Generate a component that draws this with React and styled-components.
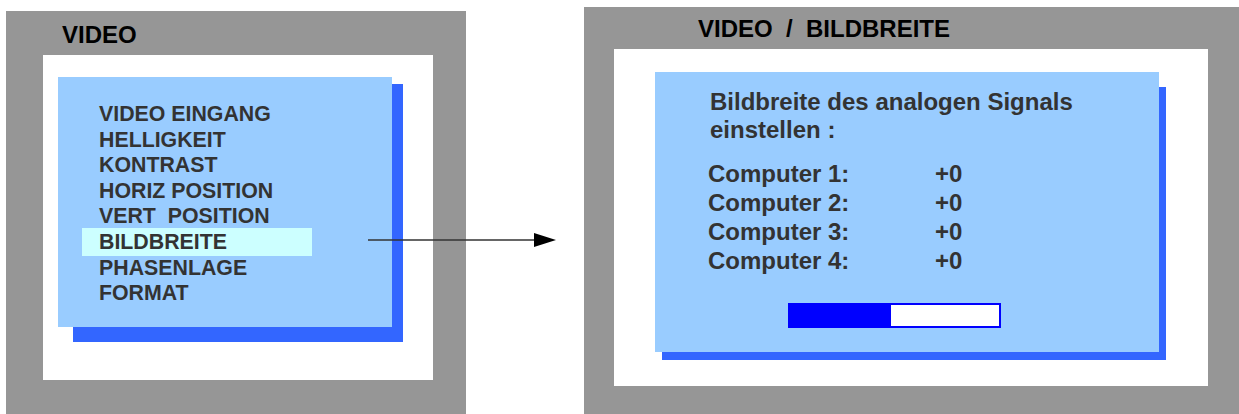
import React from 'react';
import styled, { createGlobalStyle } from 'styled-components';

const GlobalStyle = createGlobalStyle`
  html, body {
    margin: 0;
    padding: 0;
    background: #ffffff;
  }
  body {
    font-family: "Liberation Sans", Arial, Helvetica, sans-serif;
    font-weight: bold;
  }
`;

const Page = styled.div`
  position: relative;
  display: flex;
  align-items: flex-start;
  width: 1239px;
  height: 414px;
  overflow: hidden;
`;

const Frame = styled.section`
  box-sizing: border-box;
  display: flex;
  flex-direction: column;
  flex-shrink: 0;
  background: #969696;
  width: ${(p) => p.$width}px;
  height: ${(p) => p.$height}px;
  margin-left: ${(p) => p.$left}px;
  margin-top: ${(p) => p.$top}px;
  padding-top: ${(p) => p.$padTop}px;
`;

const FrameTitle = styled.h1`
  margin: 0 0 6px ${(p) => p.$indent}px;
  font-size: 24px;
  line-height: 28px;
  font-weight: bold;
  color: #000000;
  white-space: pre;
`;

const Screen = styled.div`
  box-sizing: border-box;
  background: #ffffff;
  width: ${(p) => p.$width}px;
  height: ${(p) => p.$height}px;
  margin-left: ${(p) => p.$indent}px;
  padding-top: ${(p) => p.$padTop}px;
  padding-left: ${(p) => p.$padLeft}px;
`;

const Stack = styled.div`
  display: grid;
  justify-content: start;
  align-content: start;
`;

const Shadow = styled.div`
  grid-area: 1 / 1;
  justify-self: start;
  align-self: start;
  background: #3366ff;
  width: ${(p) => p.$width}px;
  height: ${(p) => p.$height}px;
  margin-left: ${(p) => p.$dx}px;
  margin-top: ${(p) => p.$dy}px;
`;

const Panel = styled.div`
  grid-area: 1 / 1;
  justify-self: start;
  align-self: start;
  box-sizing: border-box;
  background: #99ccff;
  color: #333333;
  width: ${(p) => p.$width}px;
  height: ${(p) => p.$height}px;
  padding-top: ${(p) => p.$padTop}px;
  padding-left: ${(p) => p.$padLeft}px;
`;

const MenuList = styled.ul`
  list-style: none;
  margin: 0;
  padding: 0;
`;

const MenuItem = styled.li`
  box-sizing: border-box;
  font-size: 21.33px;
  line-height: 25.6px;
  height: 25.6px;
  white-space: pre;
  ${(p) =>
    p.$active &&
    `
    width: 230px;
    margin-left: -17px;
    padding-left: 17px;
    background: #ccffff;
    box-shadow: 0 -2px 0 #ccffff;
  `}
`;

const Heading = styled.p`
  margin: 0 0 0 2px;
  font-size: 24px;
  line-height: 28px;
`;

const Settings = styled.div`
  display: grid;
  grid-template-columns: 227px auto;
  margin-top: 15px;
  font-size: 24px;
  line-height: 29px;
`;

const Bar = styled.div`
  box-sizing: border-box;
  width: 213px;
  height: 25px;
  margin-top: 28px;
  margin-left: 80px;
  border: 2px solid #0000ff;
  background: #ffffff;
`;

const BarFill = styled.div`
  height: 100%;
  width: ${(p) => p.$value * 100}%;
  background: #0000ff;
`;

const Arrow = styled.svg`
  position: absolute;
  left: 368px;
  top: 232px;
`;

const menu = [
  'VIDEO EINGANG',
  'HELLIGKEIT',
  'KONTRAST',
  'HORIZ POSITION',
  'VERT  POSITION',
  'BILDBREITE',
  'PHASENLAGE',
  'FORMAT',
];

const computers = ['Computer 1:', 'Computer 2:', 'Computer 3:', 'Computer 4:'];

export default function App() {
  return (
    <>
      <GlobalStyle />
      <Page>
        <Frame $width={460} $height={403} $left={6} $top={11} $padTop={10}>
          <FrameTitle $indent={56}>VIDEO</FrameTitle>
          <Screen $width={390} $height={325} $indent={37} $padTop={22} $padLeft={15}>
            <Stack>
              <Shadow $width={330} $height={258} $dx={15} $dy={7} />
              <Panel $width={334} $height={250} $padTop={25} $padLeft={41}>
                <MenuList>
                  {menu.map((item) => (
                    <MenuItem key={item} $active={item === 'BILDBREITE'}>
                      {item}
                    </MenuItem>
                  ))}
                </MenuList>
              </Panel>
            </Stack>
          </Screen>
        </Frame>

        <Frame $width={655} $height={407} $left={118} $top={7} $padTop={8}>
          <FrameTitle $indent={114}>{'VIDEO  /  BILDBREITE'}</FrameTitle>
          <Screen $width={594} $height={337} $indent={30} $padTop={23} $padLeft={41}>
            <Stack>
              <Shadow $width={504} $height={273} $dx={7} $dy={15} />
              <Panel $width={504} $height={280} $padTop={16} $padLeft={53}>
                <Heading>
                  Bildbreite des analogen Signals
                  <br />
                  einstellen :
                </Heading>
                <Settings>
                  {computers.map((c) => (
                    <React.Fragment key={c}>
                      <span>{c}</span>
                      <span>+0</span>
                    </React.Fragment>
                  ))}
                </Settings>
                <Bar>
                  <BarFill $value={0.483} />
                </Bar>
              </Panel>
            </Stack>
          </Screen>
        </Frame>

        <Arrow width="192" height="16" viewBox="0 0 192 16">
          <line x1="0" y1="8" x2="168" y2="8" stroke="#333333" strokeWidth="1.5" />
          <polygon points="166,1 188,8 166,15" fill="#000000" />
        </Arrow>
      </Page>
    </>
  );
}
